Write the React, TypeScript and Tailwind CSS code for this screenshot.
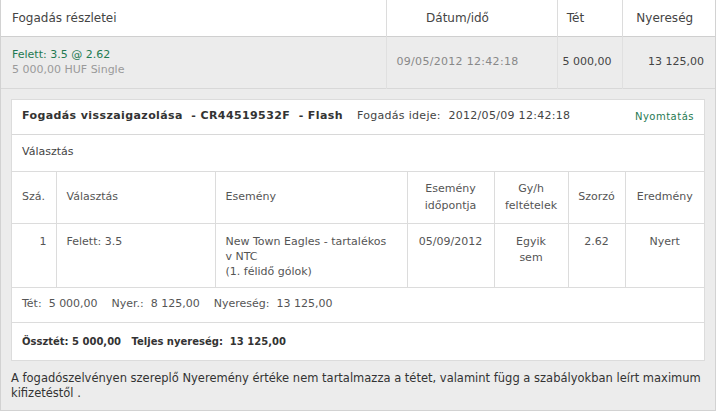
import React from "react";

const selections = [
  {
    no: "1",
    pick: "Felett: 3.5",
    event: ["New Town Eagles - tartalékos", "v NTC", "(1. félidő gólok)"],
    date: "05/09/2012",
    terms: ["Egyik", "sem"],
    odds: "2.62",
    result: "Nyert",
  },
];

export default function App() {
  return (
    <div
      className="w-[716px] h-[411px] bg-[#ececec] border border-t-0 border-[#d2d2d2] text-[11px] text-[#333]"
      style={{ fontFamily: '"DejaVu Sans", Verdana, sans-serif' }}
    >
      <table className="w-full border-collapse">
        <thead>
          <tr className="h-[36px] bg-white border-b border-[#cfcfcf] text-[#444]">
            <th className="text-left font-normal pl-[11px] text-[12px]">Fogadás részletei</th>
            <th className="w-[171px] font-normal pr-[28px] border-l border-[#dcdcdc] text-[12px]">Dátum/idő</th>
            <th className="w-[65px] font-normal pr-[28px] border-l border-[#dcdcdc] text-[12px]">Tét</th>
            <th className="w-[93px] font-normal pr-[8px] border-l border-[#dcdcdc] text-[12px]">Nyereség</th>
          </tr>
        </thead>
        <tbody>
          <tr className="h-[52px] border-b border-[#d8d8d8]">
            <td className="pl-[11px] align-middle">
              <div className="text-[#1f7a52] leading-[15px]">Felett: 3.5 @ 2.62</div>
              <div className="text-[#9a9a9a] leading-[15px]">5 000,00 HUF Single</div>
            </td>
            <td className="text-center pr-[28px] text-[#888] tracking-[0.3px] border-l border-[#e0e0e0]">
              09/05/2012 12:42:18
            </td>
            <td className="text-right pr-[10px] text-[#444] border-l border-[#e0e0e0]">5 000,00</td>
            <td className="text-right pr-[11px] text-[#444] border-l border-[#e0e0e0]">13 125,00</td>
          </tr>
        </tbody>
      </table>

      <div className="mx-[10px] mt-[10px] bg-white border border-[#dcdcdc]">
        <div className="h-[35px] flex items-center px-[10px] border-b border-[#d8d8d8]">
          <span className="font-bold text-[#333] tracking-[0.4px]">
            Fogadás visszaigazolása &nbsp;- CR44519532F &nbsp;- Flash
          </span>
          <span className="ml-[14px] text-[#444] tracking-[0.3px]">Fogadás ideje: &nbsp;2012/05/09 12:42:18</span>
          <span className="ml-auto text-[#1f7a52] text-[10px] tracking-[0.5px]">Nyomtatás</span>
        </div>
        <div className="h-[36px] flex items-center px-[10px] text-[#444]">Választás</div>
        <table className="w-full border-collapse text-[#555]">
          <thead>
            <tr className="h-[52px] border-y border-[#dcdcdc]">
              <th className="w-[44px] font-normal text-left pl-[10px]">Szá.</th>
              <th className="w-[159px] font-normal text-left pl-[10px] border-l border-[#dcdcdc]">Választás</th>
              <th className="w-[192px] font-normal text-left pl-[10px] border-l border-[#dcdcdc]">Esemény</th>
              <th className="w-[87px] font-normal text-center leading-[17px] border-l border-[#dcdcdc]">
                Esemény
                <br />
                időpontja
              </th>
              <th className="w-[74px] font-normal text-center leading-[17px] border-l border-[#dcdcdc]">
                Gy/h
                <br />
                feltételek
              </th>
              <th className="w-[57px] font-normal text-center border-l border-[#dcdcdc]">Szorzó</th>
              <th className="font-normal text-center border-l border-[#dcdcdc]">Eredmény</th>
            </tr>
          </thead>
          <tbody>
            {selections.map((s) => (
              <tr key={s.no} className="h-[64px] border-b border-[#dcdcdc] align-top">
                <td className="text-right pr-[9px] pt-[10px]">{s.no}</td>
                <td className="pl-[10px] pt-[10px] border-l border-[#dcdcdc]">{s.pick}</td>
                <td className="pl-[10px] pt-[10px] leading-[15px] border-l border-[#dcdcdc]">
                  {s.event.map((l) => (
                    <div key={l}>{l}</div>
                  ))}
                </td>
                <td className="text-center pt-[10px] border-l border-[#dcdcdc]">{s.date}</td>
                <td className="text-center pt-[10px] leading-[16px] border-l border-[#dcdcdc]">
                  {s.terms.map((l) => (
                    <div key={l}>{l}</div>
                  ))}
                </td>
                <td className="text-center pt-[10px] border-l border-[#dcdcdc]">{s.odds}</td>
                <td className="text-center pt-[10px] border-l border-[#dcdcdc]">{s.result}</td>
              </tr>
            ))}
          </tbody>
        </table>
        <div className="h-[35px] flex items-center px-[10px] border-b border-[#dcdcdc] text-[#555] whitespace-pre">
          Tét:  5 000,00    Nyer.:  8 125,00    Nyereség:  13 125,00
        </div>
        <div className="h-[37px] flex items-center px-[10px] text-[10px] font-bold text-[#333] whitespace-pre">
          Össztét: 5 000,00   Teljes nyereség:  13 125,00
        </div>
      </div>

      <p className="pl-[10px] pt-[10px] text-[11.5px] leading-[15px] text-[#333]">
        <span className="whitespace-nowrap">
          A fogadószelvényen szereplő Nyeremény értéke nem tartalmazza a tétet, valamint függ a szabályokban leírt maximum
        </span>
        <br />
        kifizetéstől .
      </p>
    </div>
  );
}
